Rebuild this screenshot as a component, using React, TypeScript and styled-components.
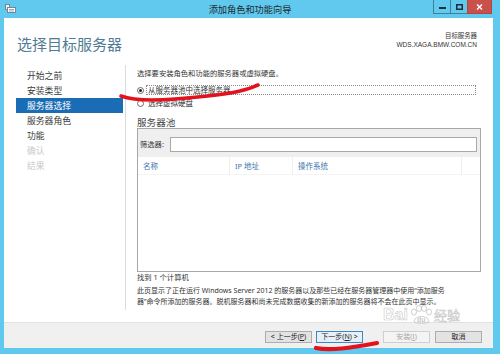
import React from "react";
import styled, { createGlobalStyle } from "styled-components";

const Global = createGlobalStyle`
  html, body { margin: 0; padding: 0; }
  body {
    width: 500px; height: 354px; overflow: hidden;
    background: #60c9ed;
    font-family: "Noto Sans", "Noto Sans CJK SC", sans-serif;
  }
  * { box-sizing: border-box; }
`;

const Frame = styled.div`
  position: relative;
  width: 500px;
  height: 354px;
  background: #60c9ed;
  display: flex;
  flex-direction: column;
`;

const TitleBar = styled.div`
  height: 18px;
  flex: none;
  display: grid;
  grid-template-columns: 1fr auto 1fr;
  align-items: start;
`;

const TitleIcon = styled.div`
  padding: 4px 0 0 5px;
  display: flex;
`;

const TitleText = styled.div`
  font-family: "Noto Sans CJK SC", sans-serif;
  font-size: 9.2px;
  line-height: 18px;
  color: #1d2a30;
`;

const WinButtons = styled.div`
  justify-self: end;
  margin-right: 8px;
  display: flex;
`;

const WinBtn = styled.div<{ $close?: boolean }>`
  width: ${(p) => (p.$close ? "25px" : "17px")};
  height: 14px;
  display: flex;
  align-items: center;
  justify-content: center;
  background: ${(p) => (p.$close ? "#c9514b" : "transparent")};
  border: 1px solid ${(p) => (p.$close ? "#b5433e" : "rgba(30,70,90,0.55)")};
  border-top: none;
  border-right: ${(p) => (p.$close ? "1px solid #b5433e" : "none")};
`;

const Client = styled.div`
  flex: 1;
  margin: 0 7px 6px 4px;
  background: #ffffff;
  display: flex;
  flex-direction: column;
  min-height: 0;
`;

const Header = styled.div`
  height: 47px;
  flex: none;
  display: flex;
  justify-content: space-between;
  padding: 16px 16px 0 13px;
`;

const PageTitle = styled.div`
  font-family: "Noto Sans CJK SC", sans-serif;
  font-size: 15px;
  line-height: 20px;
  color: #4f7b94;
`;

const ServerInfo = styled.div`
  margin-top: -2px;
  text-align: right;
  color: #333;
`;

const InfoLabel = styled.div`
  font-family: "Noto Sans CJK SC", sans-serif;
  font-size: 6.4px;
  line-height: 8px;
`;

const InfoValue = styled.div`
  font-family: "Liberation Sans", sans-serif;
  font-size: 6.5px;
  line-height: 10px;
`;

const Main = styled.div`
  flex: 1;
  display: flex;
  min-height: 0;
`;

const Nav = styled.div`
  width: 122px;
  flex: none;
  margin-bottom: 12px;
  border-right: 1px solid #dcdcdc;
  padding: 3px 2px 0 12px;
  display: flex;
  flex-direction: column;
`;

const NavItem = styled.div<{ $state?: "active" | "disabled" }>`
  height: 15px;
  line-height: 15px;
  padding-left: 11px;
  font-family: "Noto Sans CJK SC", sans-serif;
  font-size: 8.8px;
  color: ${(p) =>
    p.$state === "active" ? "#ffffff" : p.$state === "disabled" ? "#c9c9c9" : "#3a3a3a"};
  background: ${(p) => (p.$state === "active" ? "#1a6db5" : "transparent")};
`;

const Content = styled.div`
  flex: 1;
  padding: 3px 12px 0 11px;
  display: flex;
  flex-direction: column;
  font-family: "Noto Sans", "Noto Sans CJK SC", sans-serif;
  color: #333;
`;

const Text = styled.div<{ $mt?: number; $size?: number; $lh?: number }>`
  margin-top: ${(p) => p.$mt ?? 0}px;
  font-size: ${(p) => p.$size ?? 7.3}px;
  line-height: ${(p) => p.$lh ?? 10}px;
  white-space: nowrap;
`;

const RadioRow = styled.div<{ $mt: number }>`
  margin-top: ${(p) => p.$mt}px;
  height: 10px;
  display: flex;
  align-items: center;
  gap: 2px;
`;

const RadioCircle = styled.div<{ $checked?: boolean }>`
  width: 7px;
  height: 7px;
  border-radius: 50%;
  border: 1px solid #6a6a6a;
  background: #fff;
  display: flex;
  align-items: center;
  justify-content: center;
  &::after {
    content: "";
    width: 3px;
    height: 3px;
    border-radius: 50%;
    background: ${(p) => (p.$checked ? "#222" : "transparent")};
  }
`;

const RadioLabel = styled.div<{ $focused?: boolean }>`
  height: 10px;
  line-height: 8px;
  padding-left: 1px;
  font-size: 7.5px;
  border: 1px ${(p) => (p.$focused ? "dotted #8a8a8a" : "solid transparent")};
  flex: ${(p) => (p.$focused ? 1 : "none")};
  margin-right: 5px;
  white-space: nowrap;
`;

const SectionHeading = styled.div`
  margin-top: 9px;
  font-family: "Noto Sans CJK SC", sans-serif;
  font-size: 9.6px;
  line-height: 10px;
  color: #444;
`;

const PoolBox = styled.div`
  margin-top: 1px;
  height: 144px;
  border: 1px solid #a7a7a7;
  display: flex;
  flex-direction: column;
`;

const FilterBar = styled.div`
  height: 28px;
  background: #efefef;
  display: flex;
  align-items: flex-start;
  padding: 8px 3px 0 2px;
  gap: 2px;
`;

const FilterLabel = styled.div`
  font-size: 7.3px;
  line-height: 15px;
  white-space: nowrap;
  width: 28px;
`;

const FilterInput = styled.div`
  flex: 1;
  height: 15px;
  border: 1px solid #a9a9a9;
  background: #fff;
`;

const ColumnHeader = styled.div`
  height: 18px;
  display: grid;
  grid-template-columns: 92px 63px 169px 1fr;
  border-bottom: 1px solid #f4f4f4;
`;

const ColumnCell = styled.div<{ $last?: boolean }>`
  padding-left: 5px;
  font-size: 7.5px;
  line-height: 18px;
  color: #3b76ad;
  border-right: ${(p) => (p.$last ? "none" : "1px solid #efefef")};
  white-space: nowrap;
`;

const ListArea = styled.div`
  flex: 1;
  background: #fff;
`;

const Footer = styled.div`
  height: 26px;
  flex: none;
  background: #f0f0f0;
  border-top: 1px solid #e2e2e2;
  display: flex;
  justify-content: flex-end;
  align-items: center;
  padding: 3px 11px 0 0;
`;

const Button = styled.div<{ $variant?: "focus" | "disabled"; $ml: number }>`
  margin-left: ${(p) => p.$ml}px;
  width: 47px;
  height: 12px;
  display: flex;
  align-items: center;
  justify-content: center;
  font-family: "Noto Sans", "Noto Sans CJK SC", sans-serif;
  font-size: 7px;
  line-height: 10px;
  white-space: nowrap;
  color: ${(p) => (p.$variant === "disabled" ? "#a8a8a8" : "#222")};
  background: ${(p) =>
    p.$variant === "focus" ? "#e6f0f8" : p.$variant === "disabled" ? "#f4f4f4" : "#e3e3e3"};
  border: 1px solid
    ${(p) => (p.$variant === "focus" ? "#3f86c4" : p.$variant === "disabled" ? "#cfcfcf" : "#adadad")};
  u { text-decoration: underline; }
`;

const Overlay = styled.svg`
  position: absolute;
  left: 0;
  top: 0;
  pointer-events: none;
`;

const Watermark = styled.div`
  position: absolute;
  left: 383px;
  top: 305px;
  display: flex;
  align-items: center;
  gap: 1px;
  pointer-events: none;
  color: rgba(255, 255, 255, 0.25);
  -webkit-text-stroke: 0.6px rgba(150, 150, 150, 0.55);
`;

const WmLatin = styled.span`
  font-family: "Liberation Sans", sans-serif;
  font-weight: bold;
  font-size: 16px;
  line-height: 18px;
`;

const WmCjk = styled.span`
  font-family: "Noto Sans CJK SC", sans-serif;
  font-size: 13px;
  line-height: 18px;
`;

const navItems: { label: string; state?: "active" | "disabled" }[] = [
  { label: "开始之前" },
  { label: "安装类型" },
  { label: "服务器选择", state: "active" },
  { label: "服务器角色" },
  { label: "功能" },
  { label: "确认", state: "disabled" },
  { label: "结果", state: "disabled" },
];

export default function App() {
  return (
    <>
      <Global />
      <Frame>
        <TitleBar>
          <TitleIcon>
            <svg width="11" height="9" viewBox="0 0 11 9">
              <rect x="0.5" y="0.5" width="4" height="5" fill="#f4f4f4" stroke="#6f8a96" />
              <rect x="2.5" y="3.5" width="8" height="5" fill="#ffffff" stroke="#6f8a96" />
              <line x1="4" y1="5.5" x2="9" y2="5.5" stroke="#9ab" />
              <line x1="4" y1="7" x2="9" y2="7" stroke="#9ab" />
            </svg>
          </TitleIcon>
          <TitleText>添加角色和功能向导</TitleText>
          <WinButtons>
            <WinBtn>
              <svg width="7" height="7" viewBox="0 0 7 7">
                <rect x="0" y="4" width="7" height="2" fill="#1f2f38" />
              </svg>
            </WinBtn>
            <WinBtn>
              <svg width="7" height="6" viewBox="0 0 7 6">
                <rect x="0.75" y="0.75" width="5.5" height="4.5" fill="none" stroke="#1f2f38" strokeWidth="1.5" />
              </svg>
            </WinBtn>
            <WinBtn $close>
              <svg width="7" height="6" viewBox="0 0 7 6">
                <path d="M1 0.5 L6 5.5 M6 0.5 L1 5.5" stroke="#fff" strokeWidth="1.4" />
              </svg>
            </WinBtn>
          </WinButtons>
        </TitleBar>
        <Client>
          <Header>
            <PageTitle>选择目标服务器</PageTitle>
            <ServerInfo>
              <InfoLabel>目标服务器</InfoLabel>
              <InfoValue>WDS.XAGA.BMW.COM.CN</InfoValue>
            </ServerInfo>
          </Header>
          <Main>
            <Nav>
              {navItems.map((n) => (
                <NavItem key={n.label} $state={n.state}>
                  {n.label}
                </NavItem>
              ))}
            </Nav>
            <Content>
              <Text>选择要安装角色和功能的服务器或虚拟硬盘。</Text>
              <RadioRow $mt={7}>
                <RadioCircle $checked />
                <RadioLabel $focused>从服务器池中选择服务器</RadioLabel>
              </RadioRow>
              <RadioRow $mt={3}>
                <RadioCircle />
                <RadioLabel>选择虚拟硬盘</RadioLabel>
              </RadioRow>
              <SectionHeading>服务器池</SectionHeading>
              <PoolBox>
                <FilterBar>
                  <FilterLabel>筛选器:</FilterLabel>
                  <FilterInput />
                </FilterBar>
                <ColumnHeader>
                  <ColumnCell>名称</ColumnCell>
                  <ColumnCell>IP 地址</ColumnCell>
                  <ColumnCell>操作系统</ColumnCell>
                  <ColumnCell $last />
                </ColumnHeader>
                <ListArea />
              </PoolBox>
              <Text>找到 1 个计算机</Text>
              <Text $mt={3} $size={7} $lh={11}>
                此页显示了正在运行 Windows Server 2012 的服务器以及那些已经在服务器管理器中使用“添加服务
              </Text>
              <Text $size={7} $lh={11}>
                器”命令所添加的服务器。脱机服务器和尚未完成数据收集的新添加的服务器将不会在此页中显示。
              </Text>
            </Content>
          </Main>
          <Footer>
            <Button $ml={0}>
              &lt; 上一步(<u>P</u>)
            </Button>
            <Button $ml={4} $variant="focus">
              下一步(<u>N</u>) &gt;
            </Button>
            <Button $ml={20} $variant="disabled">
              安装(<u>I</u>)
            </Button>
            <Button $ml={5}>取消</Button>
          </Footer>
        </Client>
        <Watermark>
          <WmLatin>Bai</WmLatin>
          <svg width="24" height="20" viewBox="0 0 24 20">
            <g fill="rgba(255,255,255,0.25)" stroke="rgba(150,150,150,0.55)" strokeWidth="0.8">
              <ellipse cx="5" cy="7" rx="2.5" ry="3" />
              <ellipse cx="10" cy="3.5" rx="2.5" ry="3" />
              <ellipse cx="15" cy="3.5" rx="2.5" ry="3" />
              <ellipse cx="20" cy="7" rx="2.5" ry="3" />
              <path d="M5 16 C 6 10, 19 10, 20 16 C 20 19, 5 19, 5 16 Z" />
            </g>
            <text x="8" y="17" fontFamily="Liberation Sans" fontWeight="bold" fontSize="7" fill="rgba(150,150,150,0.55)">du</text>
          </svg>
          <WmCjk>经验</WmCjk>
        </Watermark>
        <Overlay width="500" height="354" viewBox="0 0 500 354">
          <path
            d="M121 96 C 132 100, 150 101, 175 99 S 225 95, 240 91 S 252 87, 258 85"
            fill="none"
            stroke="#e3121c"
            strokeWidth="3.6"
            strokeLinecap="round"
          />
          <path
            d="M316 348 C 330 351, 350 348, 377 343"
            fill="none"
            stroke="#e3121c"
            strokeWidth="4.2"
            strokeLinecap="round"
          />
        </Overlay>
      </Frame>
    </>
  );
}
